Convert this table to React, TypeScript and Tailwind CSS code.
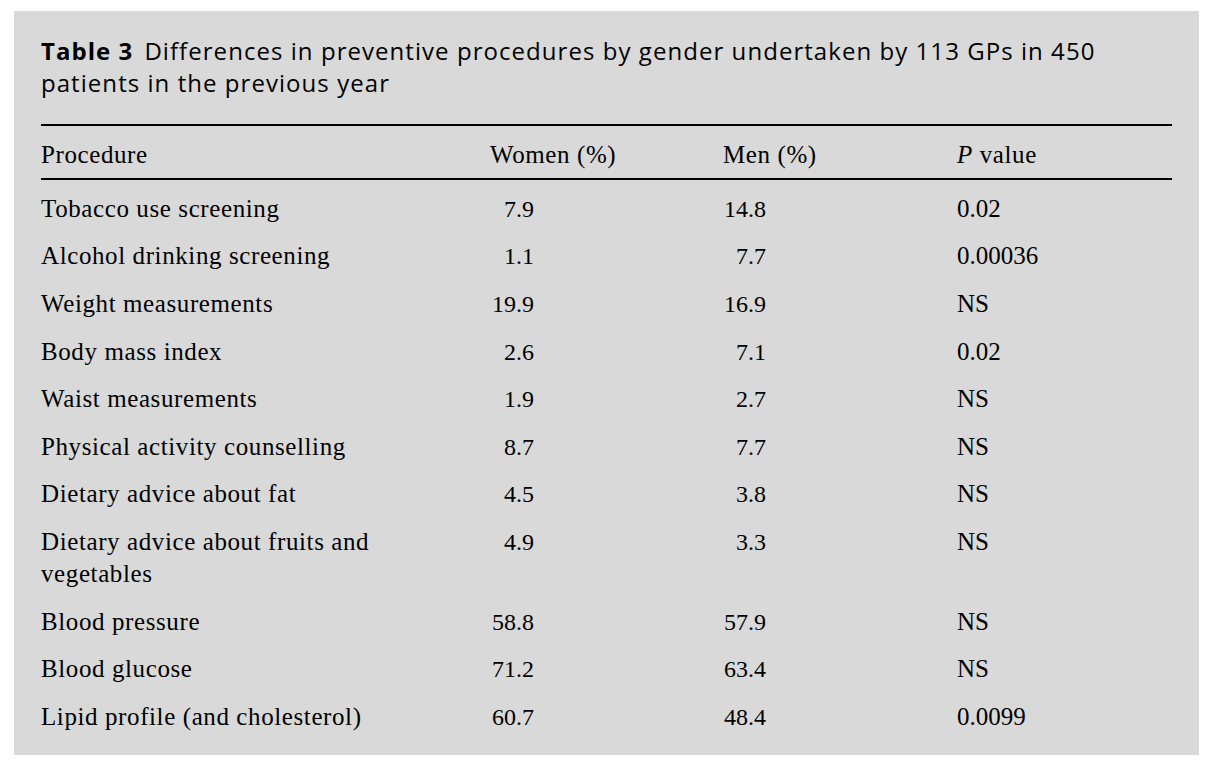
import React from "react";

type Row = { name: string[]; women: string; men: string; p: string };

const rows: Row[] = [
  { name: ["Tobacco use screening"], women: "7.9", men: "14.8", p: "0.02" },
  { name: ["Alcohol drinking screening"], women: "1.1", men: "7.7", p: "0.00036" },
  { name: ["Weight measurements"], women: "19.9", men: "16.9", p: "NS" },
  { name: ["Body mass index"], women: "2.6", men: "7.1", p: "0.02" },
  { name: ["Waist measurements"], women: "1.9", men: "2.7", p: "NS" },
  { name: ["Physical activity counselling"], women: "8.7", men: "7.7", p: "NS" },
  { name: ["Dietary advice about fat"], women: "4.5", men: "3.8", p: "NS" },
  { name: ["Dietary advice about fruits and", "vegetables"], women: "4.9", men: "3.3", p: "NS" },
  { name: ["Blood pressure"], women: "58.8", men: "57.9", p: "NS" },
  { name: ["Blood glucose"], women: "71.2", men: "63.4", p: "NS" },
  { name: ["Lipid profile (and cholesterol)"], women: "60.7", men: "48.4", p: "0.0099" },
];

const cols = "grid grid-cols-[449px_233px_234px_1fr]";

export default function App() {
  return (
    <div className="w-[1207px] h-[761px] bg-white pt-[11px] pl-[14px]">
      <div className="w-[1185px] h-[744px] bg-[#d9d9d9] px-[27px] pt-[24px] text-black">
        {/* Caption */}
        <p className="font-['Open_Sans',sans-serif] text-[24px] leading-[31.5px] tracking-[1.05px]">
          <span className="font-bold">Table 3</span>
          <span className="ml-[11px]">
            Differences in preventive procedures by gender undertaken by 113 GPs in 450
          </span>
          <br />
          patients in the previous year
        </p>

        {/* Table */}
        <div className="mt-[26px] font-['Liberation_Serif',serif] text-[25px] leading-[32px] tracking-[0.6px]">
          <div className={`${cols} border-y-2 border-black pt-[13px] pb-[7px]`}>
            <div>Procedure</div>
            <div>Women (%)</div>
            <div>Men (%)</div>
            <div>
              <i>P</i> value
            </div>
          </div>

          <div className="pt-[5px]">
            {rows.map((r) => (
              <div key={r.name[0]} className={`${cols} py-[7.8px]`}>
                <div>
                  {r.name.map((line) => (
                    <div key={line}>{line}</div>
                  ))}
                </div>
                <div className="text-[24px] tracking-normal">
                  <span className="inline-block w-[44px] text-right">{r.women}</span>
                </div>
                <div className="text-[24px] tracking-normal">
                  <span className="inline-block w-[43px] text-right">{r.men}</span>
                </div>
                <div className="tracking-normal">{r.p}</div>
              </div>
            ))}
          </div>
        </div>
      </div>
    </div>
  );
}
